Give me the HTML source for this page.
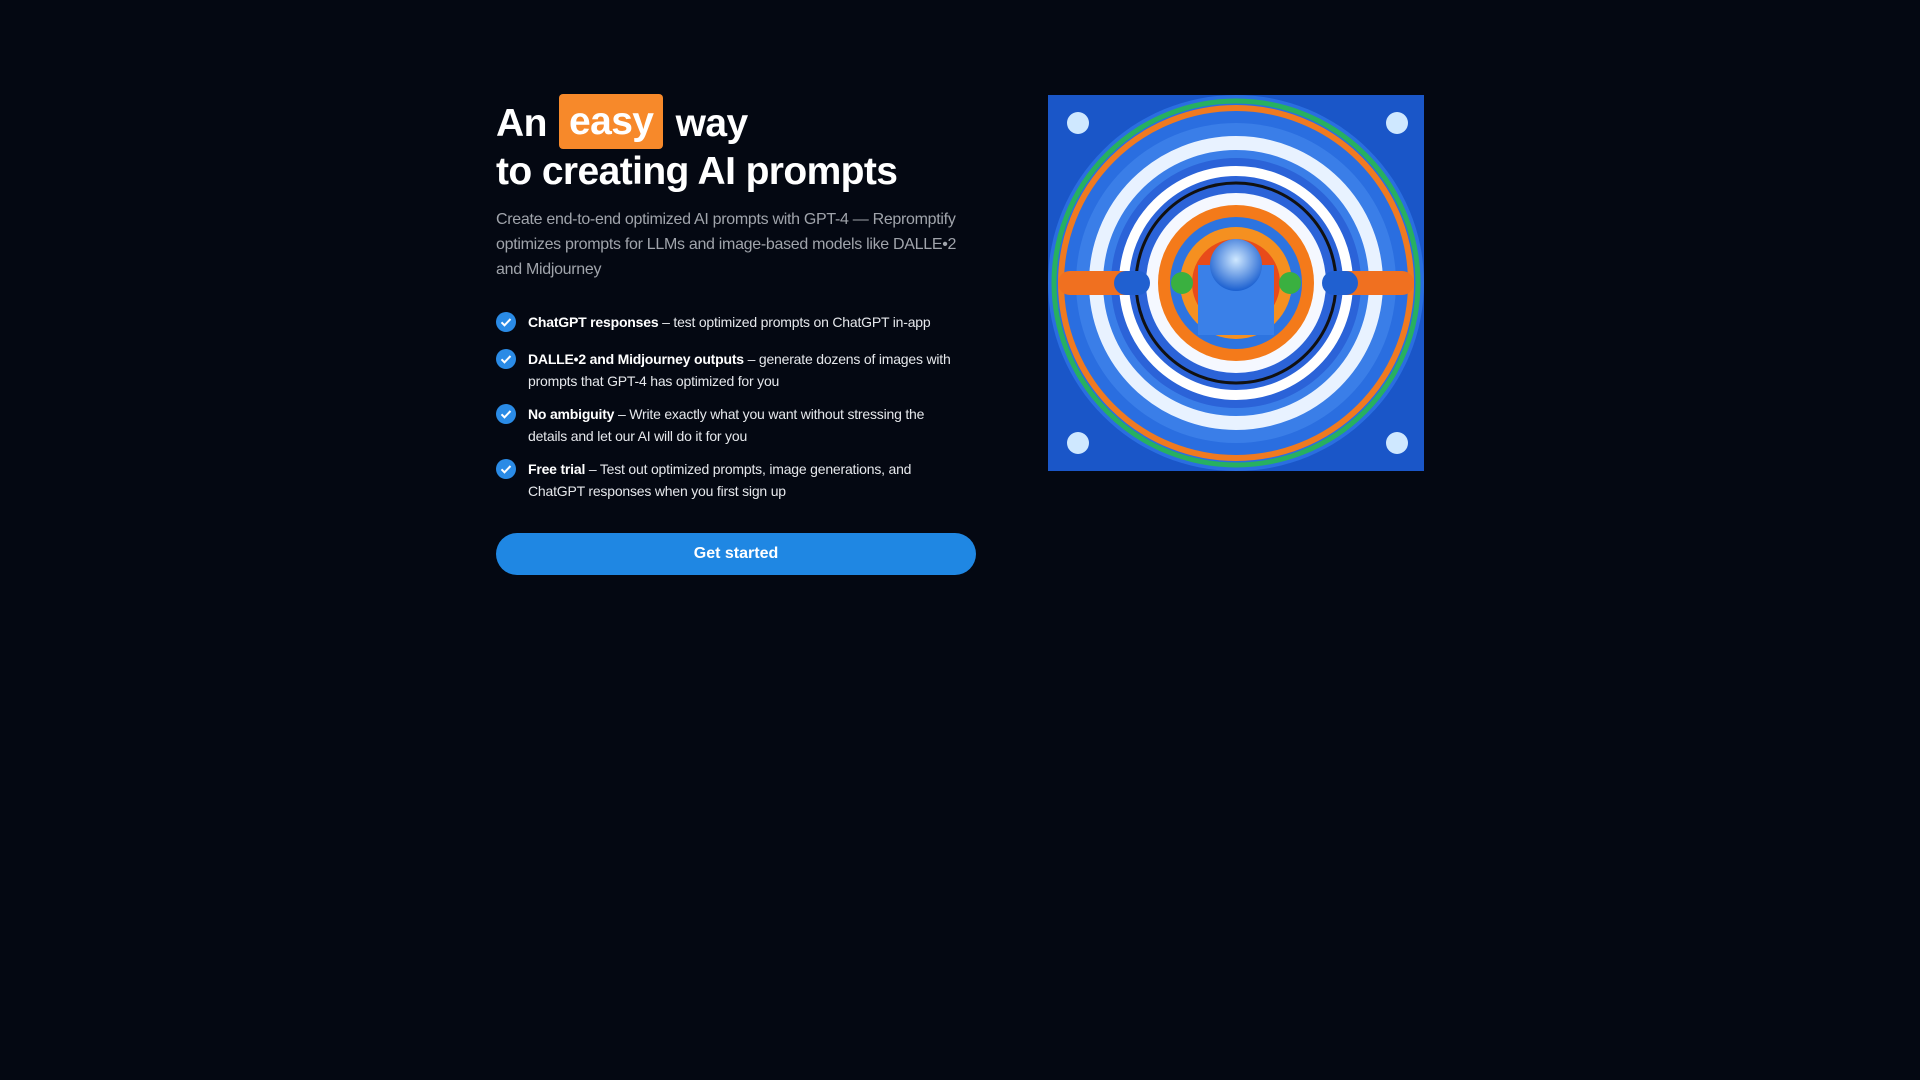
<!DOCTYPE html>
<html><head><meta charset="utf-8"><style>
*{margin:0;padding:0;box-sizing:border-box}
body{width:1920px;height:1080px;background:#040812;font-family:"Liberation Sans",sans-serif;color:#fff;position:relative;overflow:hidden}
h1{position:absolute;left:496px;top:94px;font-size:39px;line-height:45px;font-weight:700;letter-spacing:-0.6px}
.easy{display:inline-block;background:#f7892a;border-radius:4px;padding:0 10px;height:55px;line-height:55px;margin:0 2px;vertical-align:2px}
p.d{position:absolute;left:496px;top:207px;width:490px;font-size:16px;line-height:25px;color:#a0a4ab;letter-spacing:-0.3px}
ul{position:absolute;left:496px;top:311px;width:490px;list-style:none}
li{position:relative;padding-left:32px;font-size:14px;line-height:22px;color:#e6e8ec;margin-bottom:11px;letter-spacing:-0.2px}
li:first-child{margin-bottom:15px}
li b{color:#fff}
li svg{position:absolute;left:0;top:1px}
.btn{position:absolute;left:496px;top:533px;width:480px;height:42px;border-radius:21px;background:#1f87e3;text-align:center;line-height:42px;font-weight:700;font-size:16px}
.img{position:absolute;left:1048px;top:95px;width:376px;height:376px;overflow:hidden}
</style></head><body>
<h1>An <span class="easy">easy</span> way<br>to creating AI prompts</h1>
<p class="d">Create end-to-end optimized AI prompts with GPT-4 — Repromptify optimizes prompts for LLMs and image-based models like DALLE•2 and Midjourney</p>
<ul>
<li><svg width="20" height="20" viewBox="0 0 20 20"><circle cx="10" cy="10" r="10" fill="#2a8be6"/><path d="M5.5 10.3l3 3 6-6.3" stroke="#fff" stroke-width="2" fill="none"/></svg><b>ChatGPT responses</b> – test optimized prompts on ChatGPT in-app</li>
<li><svg width="20" height="20" viewBox="0 0 20 20"><circle cx="10" cy="10" r="10" fill="#2a8be6"/><path d="M5.5 10.3l3 3 6-6.3" stroke="#fff" stroke-width="2" fill="none"/></svg><b>DALLE•2 and Midjourney outputs</b> – generate dozens of images with<br>prompts that GPT-4 has optimized for you</li>
<li><svg width="20" height="20" viewBox="0 0 20 20"><circle cx="10" cy="10" r="10" fill="#2a8be6"/><path d="M5.5 10.3l3 3 6-6.3" stroke="#fff" stroke-width="2" fill="none"/></svg><b>No ambiguity</b> – Write exactly what you want without stressing the<br>details and let our AI will do it for you</li>
<li><svg width="20" height="20" viewBox="0 0 20 20"><circle cx="10" cy="10" r="10" fill="#2a8be6"/><path d="M5.5 10.3l3 3 6-6.3" stroke="#fff" stroke-width="2" fill="none"/></svg><b>Free trial</b> – Test out optimized prompts, image generations, and<br>ChatGPT responses when you first sign up</li>
</ul>
<div class="btn">Get started</div>
<div class="img"><svg width="376" height="376" viewBox="0 0 376 376">
<defs><radialGradient id="c" cx="50%" cy="40%" r="60%"><stop offset="0" stop-color="#cfe8ff"/><stop offset="1" stop-color="#1a5fd0"/></radialGradient></defs>
<rect width="376" height="376" fill="#1a56c8"/>
<circle cx="188" cy="188" r="188" fill="#2a6ee0"/>
<circle cx="188" cy="188" r="182" fill="none" stroke="#27b060" stroke-width="5"/>
<circle cx="188" cy="188" r="175" fill="none" stroke="#f07a20" stroke-width="6"/>
<circle cx="188" cy="188" r="160" fill="#3a7ee8"/>
<circle cx="188" cy="188" r="140" fill="none" stroke="#e8f2ff" stroke-width="14"/>
<circle cx="188" cy="188" r="125" fill="#2b63d8"/>
<circle cx="188" cy="188" r="112" fill="none" stroke="#fff" stroke-width="10"/>
<circle cx="188" cy="188" r="100" fill="none" stroke="#111" stroke-width="3"/>
<circle cx="188" cy="188" r="90" fill="#f5f8ff"/>
<circle cx="188" cy="188" r="78" fill="#f47a1a"/>
<circle cx="188" cy="188" r="66" fill="#2d74e0"/>
<circle cx="188" cy="188" r="56" fill="#f59020"/>
<circle cx="188" cy="188" r="44" fill="#e84b1a"/>
<rect x="150" y="170" width="76" height="70" fill="#3a80e8"/>
<circle cx="188" cy="170" r="26" fill="url(#c)"/>
<rect x="10" y="176" width="90" height="24" rx="12" fill="#f07020"/>
<rect x="276" y="176" width="90" height="24" rx="12" fill="#f07020"/>
<rect x="66" y="176" width="36" height="24" rx="12" fill="#2060d0"/>
<rect x="274" y="176" width="36" height="24" rx="12" fill="#2060d0"/>
<circle cx="134" cy="188" r="11" fill="#3ab040"/><circle cx="242" cy="188" r="11" fill="#3ab040"/>
<circle cx="30" cy="28" r="11" fill="#cfe8ff"/><circle cx="349" cy="28" r="11" fill="#cfe8ff"/>
<circle cx="30" cy="348" r="11" fill="#cfe8ff"/><circle cx="349" cy="348" r="11" fill="#cfe8ff"/>
</svg></div>
</body></html>
